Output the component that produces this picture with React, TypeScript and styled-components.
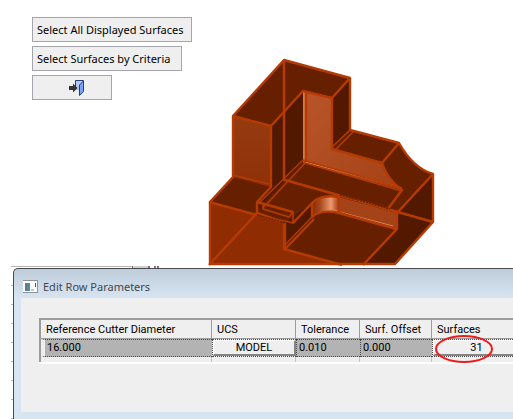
import React from 'react';
import styled, { createGlobalStyle, css } from 'styled-components';

const Global = createGlobalStyle`
  * { box-sizing: border-box; }
  body { margin: 0; background: #fff; color: #000; font: 11px/16px "Noto Sans", sans-serif; overflow: hidden; }
  button, input { font: inherit; color: inherit; }
`;

const Screen = styled.main`
  display: flex;
  flex-direction: column;
  min-height: 100vh;
`;

const Workspace = styled.section`
  display: grid;
  grid-template-columns: 208px 1fr;
  height: 266px;
`;

const Actions = styled.div`
  display: flex;
  flex-direction: column;
  align-items: flex-start;
  gap: 4px;
  padding: 17px 0 0 32px;
`;

const ActionButton = styled.button<{ $width: number }>`
  display: flex;
  align-items: center;
  justify-content: flex-start;
  width: ${p => p.$width}px;
  height: 25px;
  padding: 0 4px;
  border: 1px solid #a5a5ad;
  background: #efefef;
  white-space: nowrap;
`;

const IconButton = styled(ActionButton)`
  justify-content: center;
  padding-left: 14px;
`;

const Part = styled.svg`
  display: block;
  align-self: end;
  width: 228px;
  height: 210px;
`;

const Underlay = styled.div`
  display: flex;
  flex-direction: column;
  flex: 1;
  padding-left: 11px;
`;

const PaneEdge = styled.div`
  flex: none;
  display: flex;
  height: 2px;
`;

const EdgeSegment = styled.span<{ $width: number; $color: string; $height?: number }>`
  width: ${p => p.$width}px;
  height: ${p => p.$height ?? 2}px;
  background: ${p => p.$color};
`;

const DialogRow = styled.div`
  display: flex;
  flex: 1;
`;

const Ticks = styled.div`
  flex: none;
  width: 2px;
  background: repeating-linear-gradient(#fff 0 17px, #b5b5b5 17px 18px, #fff 18px 19px);
`;

const Dialog = styled.section`
  display: flex;
  flex: 1;
  min-width: 0;
  flex-direction: column;
  padding: 0 0 7px 7px;
  border: solid #49494f;
  border-width: 1px 0 0 1px;
  border-radius: 5px 0 0 0;
  background: linear-gradient(#bfcddb 0, #d7e4f2 29px);
`;

const TitleBar = styled.header`
  display: flex;
  align-items: center;
  gap: 5px;
  height: 29px;
  padding: 6px 0 0 2px;
`;

const Title = styled.h1`
  margin: 0;
  color: #43474d;
  font: inherit;
`;

const Content = styled.div`
  flex: 1;
  overflow: hidden;
  padding: 20px 0 0 18px;
  background: #efefef;
`;

const Grid = styled.table`
  width: calc(100% + 8px);
  table-layout: fixed;
  border-collapse: separate;
  border-spacing: 0;
  border: solid #9c9c9c;
  border-width: 2px 0 0 2px;
  box-shadow: 0 2px #fff;
  font: 11px/16px Roboto, sans-serif;
`;

const Head = styled.th`
  height: 19px;
  padding: 1px 0 0 5px;
  border-right: 1px solid #9c9c9c;
  border-bottom: 1px solid #9c9c9c;
  font-weight: 400;
  text-align: left;
  white-space: nowrap;
  &:last-child { border-right: 0; }
`;

const Cell = styled.td<{ $inset?: boolean }>`
  position: relative;
  height: 18px;
  padding: 0;
  border: dotted #4c4c4c;
  border-width: 1px 0 1px 1px;
  background: #b3b3b3;
  &:first-child {
    border-left: 4px solid #efefef;
  }
  ${p => p.$inset && css`background: #efefef;`}
`;

const ValueInput = styled.input`
  display: block;
  width: 100%;
  height: 16px;
  padding: 0 0 0 2px;
  border: 0;
  background: transparent;
`;

const CellButton = styled.button`
  display: block;
  width: 100%;
  height: 16px;
  padding: 0;
  border: solid;
  border-width: 1px 2px 2px 1px;
  border-color: #fff #858585 #858585 #fff;
  background: #efefef;
  line-height: 14px;
`;

const Tail = styled.td`
  height: 5px;
  padding: 0;
  border-right: 1px solid #c4c4c4;
  &:last-child { border-right: 0; }
`;

const Ring = styled.svg`
  position: absolute;
  z-index: 1;
  left: 1px;
  top: -6px;
  width: 60px;
  height: 30px;
  pointer-events: none;
`;

const columns = [
  { name: 'Reference Cutter Diameter', width: 171 },
  { name: 'UCS', width: 84 },
  { name: 'Tolerance', width: 64 },
  { name: 'Surf. Offset', width: 72 },
  { name: 'Surfaces', width: 0 },
];

const DoorIcon = () => (
  <svg width="16" height="18" viewBox="0 0 16 18" aria-hidden="true">
    <path d="M6.500 11V1.500h8V12" fill="#b6c9ed" stroke="#203f83" />
    <path d="M10.500 6 14.500 2V12.500L10.500 16.500Z" fill="#79a0fa" stroke="#203f83" />
    <path d="M0 7h4V4.500L8.500 9 4 13.500V11H0Z" fill="#333" />
  </svg>
);

const WindowIcon = () => (
  <svg width="15" height="13" viewBox="0 0 15 13" aria-hidden="true">
    <path d="M0 0H15V13H0Z" fill="#8c9297" />
    <path d="M0 1H14V12H0Z" fill="#fff" />
    <path d="M2 3H7V11H2Z" fill="#4b8e94" />
    <path d="M2 3H4V11H2Z" fill="#5d76a3" />
    <path d="M8 9H11V11H8Z" fill="#c2c5c8" />
    <path d="M12 3H13V7H12Z" fill="#465766" />
  </svg>
);

const MachinedPart = () => (
  <Part viewBox="208 56 228 210" role="img" aria-label="Machined part with displayed surfaces">
    <defs>
      <linearGradient id="wall" x1="0" y1="0" x2="1" y2="1">
        <stop stopColor="#b95529" /><stop offset="1" stopColor="#a44116" />
      </linearGradient>
      <linearGradient id="side" x1="0" y1="0" x2="0" y2="1">
        <stop stopColor="#963b11" /><stop offset="1" stopColor="#8f3008" />
      </linearGradient>
      <linearGradient id="round">
        <stop stopColor="#842b07" /><stop offset=".3" stopColor="#a8481c" /><stop offset=".7" stopColor="#ee9871" /><stop offset="1" stopColor="#9c3a10" />
      </linearGradient>
    </defs>
    <path d="M284 60 350 78V130L399 143Q413 168 433 174V222L395 265H209V202L233 177V116Z" fill="#662000" />
    <path d="M233 116 271 126V187L233 177Z" fill="url(#side)" />
    <path d="M209 202 257 215 284 222V250L342 265H209Z" fill="#8f2c02" />
    <path d="M271 126 303 91V162L257 210V202L271 187ZM332 98 350 78V130L332 149Z" fill="#521900" />
    <path d="M303 91 332 98V149L382 163Q388 180 402 190L303 163Z" fill="url(#wall)" />
    <path d="M433 174V222L395 265H363L397 229V213ZM285 223 312 203V219L285 249Z" fill="#521900" />
    <path d="M339 197 397 213V229L339 212Z" fill="#a44318" />
    <path d="M312 203Q321 194 339 197V212Q321 209 312 217Z" fill="url(#round)" />
    <path d="M304 92V160" fill="none" stroke="#d98860" strokeWidth="1.500" />
    <path d="M305 162 396 186M318 213Q326 209 338 211M340 212 393 226" fill="none" stroke="#d9825a" />
    <g fill="none" stroke="#b53b02" strokeWidth="2.400" strokeLinejoin="round">
      <path d="M233 116 284 60 350 78V130L399 143Q413 168 433 174V222L395 264H210V202L233 177V116L271 126 303 91 332 98 350 78M332 98V149L382 163 399 143" />
      <path d="M284 60V181M271 126V187L257 202V213L280 221M284 222V249L342 265M209 202 257 215M209 265 257 213M257 202 293 212" />
      <path d="M306 92V162M382 163Q387 179 402 190L387 210M285 180 433 222M285 223V249L314 219M293 223 312 203M363 265 397 229V213L433 174" />
      <path d="M312 218V203Q321 194 339 197V213M312 217Q321 209 339 213L396 229" />
    </g>
    <g fill="none" stroke="#b53b02" strokeWidth="1.500" strokeLinejoin="round">
      <path d="M233 175 269 184M258 204 303 160 402 188M263 208 305 163 402 191M263 203V209L289 217 293 212V223L280 220M332 147 350 130M336 149 353 132" />
      <path d="M284 246 312 217" />
    </g>
    <path d="M257 215 286 223M340 195 390 209" fill="none" stroke="#6b2100" strokeWidth="1.500" strokeDasharray="2 1" />
  </Part>
);

export default function App() {
  return (
    <Screen>
      <Global />
      <Workspace>
        <Actions>
          <ActionButton $width={160}>Select All Displayed Surfaces</ActionButton>
          <ActionButton $width={150}>Select Surfaces by Criteria</ActionButton>
          <IconButton $width={80} aria-label="Exit"><DoorIcon /></IconButton>
        </Actions>
        <MachinedPart />
      </Workspace>
      <Underlay>
        <PaneEdge>
          <EdgeSegment $width={121} $color="#b5b5b5" $height={1} />
          <EdgeSegment $width={1} $color="#77777b" />
          <EdgeSegment $width={15} $color="#d0d0d0" />
          <EdgeSegment $width={2} $color="#77777b" />
          <EdgeSegment $width={4} $color="#fff" />
          <EdgeSegment $width={2} $color="#77777b" />
          <EdgeSegment $width={1} $color="#fff" />
          <EdgeSegment $width={2} $color="#77777b" />
        </PaneEdge>
        <DialogRow>
          <Ticks />
          <Dialog>
            <TitleBar><WindowIcon /><Title>Edit Row Parameters</Title></TitleBar>
            <Content>
              <Grid>
                <colgroup>{columns.map(c => <col key={c.name} width={c.width || undefined} />)}</colgroup>
                <thead><tr>{columns.map(c => <Head key={c.name} scope="col">{c.name}</Head>)}</tr></thead>
                <tbody>
                  <tr>
                    <Cell><ValueInput aria-label="Reference Cutter Diameter" defaultValue="16.000" /></Cell>
                    <Cell $inset><CellButton>MODEL</CellButton></Cell>
                    <Cell><ValueInput aria-label="Tolerance" defaultValue="0.010" /></Cell>
                    <Cell><ValueInput aria-label="Surf. Offset" defaultValue="0.000" /></Cell>
                    <Cell $inset>
                      <CellButton>31</CellButton>
                      <Ring viewBox="0 0 60 30" aria-hidden="true"><ellipse cx="30" cy="15" rx="28" ry="13" fill="none" stroke="#f01c1c" strokeWidth="2" /></Ring>
                    </Cell>
                  </tr>
                  <tr>{columns.map(c => <Tail key={c.name} />)}</tr>
                </tbody>
              </Grid>
            </Content>
          </Dialog>
        </DialogRow>
      </Underlay>
    </Screen>
  );
}
